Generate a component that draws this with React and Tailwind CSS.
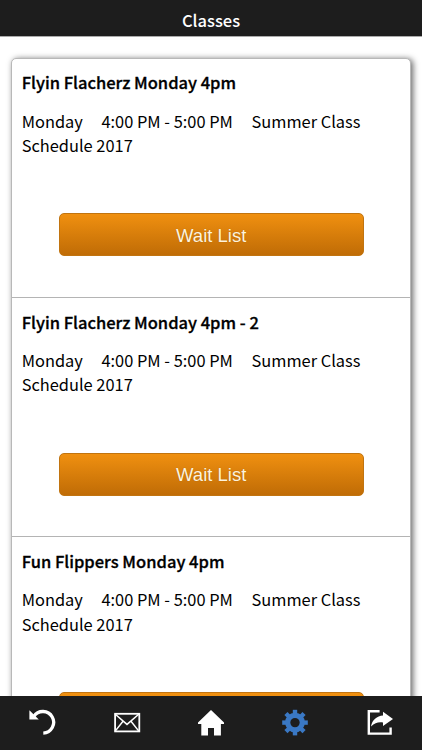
const classes = [
  { id: 1, name: 'Flyin Flacherz Monday 4pm', day: 'Monday', time: '4:00 PM - 5:00 PM', session: 'Summer Class Schedule 2017' },
  { id: 2, name: 'Flyin Flacherz Monday 4pm - 2', day: 'Monday', time: '4:00 PM - 5:00 PM', session: 'Summer Class Schedule 2017' },
  { id: 3, name: 'Fun Flippers Monday 4pm', day: 'Monday', time: '4:00 PM - 5:00 PM', session: 'Summer Class Schedule 2017' },
];

const UndoIcon = () => (
  <svg width="28" height="28" viewBox="0 0 28 28" fill="none">
    <path d="M5.8 7.4A10.8 10.8 0 1 1 15.3 24.1" stroke="#fff" strokeWidth="3.3" />
    <path d="M1.4 1.3V10.6H10.8Z" fill="#fff" />
  </svg>
);

const MailIcon = () => (
  <svg width="28" height="28" viewBox="0 0 28 28" fill="none" stroke="#fff">
    <rect x="2.1" y="4.8" width="24.2" height="17.6" strokeWidth="1.8" />
    <path d="M2 5 14 15.4 26 5M2 22.4 10 12.2M26 22.4 18 12.2" strokeWidth="1.5" />
  </svg>
);

const HomeIcon = () => (
  <svg width="28" height="28" viewBox="0 0 28 28">
    <path fill="#fff" d="M14 1 1 13.6V15H4.3V26.4H11V19H17V26.4H23.9V15H27V13.6Z" />
  </svg>
);

const teeth = [0, 45, 90, 135, 180, 225, 270, 315];

const GearIcon = () => (
  <svg width="28" height="28" viewBox="0 0 28 28">
    <circle cx="14" cy="13.6" r="7.3" fill="none" stroke="#3a78c4" strokeWidth="5.2" />
    {teeth.map(angle => (
      <path key={angle} d="M11.8 .8H16.2V5.6H11.8Z" fill="#3a78c4" transform={`rotate(${angle} 14 13.6)`} />
    ))}
  </svg>
);

const ShareIcon = () => (
  <svg width="28" height="28" viewBox="0 0 28 28">
    <path d="M13.6 2.3H2.8V24.6H24.6V18.4" fill="none" stroke="#fff" strokeWidth="2.4" />
    <path d="M17 2.8 27 10 17 17V13.4C12 12.8 9 13.8 5 17.6C6 10.6 11 7 17 6.4Z" fill="#fff" />
  </svg>
);

const tabs = [
  { id: 'back', Icon: UndoIcon },
  { id: 'mail', Icon: MailIcon },
  { id: 'home', Icon: HomeIcon },
  { id: 'settings', Icon: GearIcon },
  { id: 'share', Icon: ShareIcon },
];

const ClassRow = ({ item }) => (
  <li className="h-[239.2px] shrink-0 border-b border-[#b4b4b4] pt-[11.4px] pr-[10px] pl-[9.7px]">
    <h2 className="text-[16.5px] leading-6 font-medium [-webkit-text-stroke:0.3px_#000]">{item.name}</h2>
    <p className="mt-[14.5px] text-[16.4px] leading-[24.4px]">
      <span className="mr-[18.6px]">{item.day}</span>
      <span className="mr-[18.6px]">{item.time}</span>
      {item.session}
    </p>
    <button className="mt-[55.7px] ml-[37px] block h-[43px] w-[305px] rounded-[5px] border border-[#c17410] bg-linear-to-b from-[#f09010] to-[#c06c06] pt-px font-['Liberation_Sans',sans-serif] text-[18.5px] text-[#fff3dc] [text-shadow:0_0_1px_rgba(0,0,0,0.25)]">
      Wait List
    </button>
  </li>
);

const App = () => {
  return (
    <div className="flex h-[750px] w-[422px] flex-col overflow-hidden bg-white font-['Noto_Sans_CJK_SC',sans-serif] text-black">
      <header className="flex h-9 shrink-0 items-center justify-center bg-[#1d1d1d] pt-1 shadow-[0_1px_0_#aaa]">
        <h1 className="text-[16.5px] leading-6 font-medium text-white">Classes</h1>
      </header>

      <main className="flex-1 overflow-hidden px-[11px] pt-[22px]">
        <ul className="rounded-[5px] border border-[#b8b8b8] bg-white shadow-[2px_1px_6px_rgba(0,0,0,0.6)]">
          {classes.map(item => (
            <ClassRow key={item.id} item={item} />
          ))}
        </ul>
      </main>

      <nav className="grid h-[54px] shrink-0 grid-cols-5 bg-[#1d1d1d]">
        {tabs.map(({ id, Icon }) => (
          <button key={id} aria-label={id} className="flex items-center justify-center">
            <Icon />
          </button>
        ))}
      </nav>
    </div>
  );
};

export default App;
